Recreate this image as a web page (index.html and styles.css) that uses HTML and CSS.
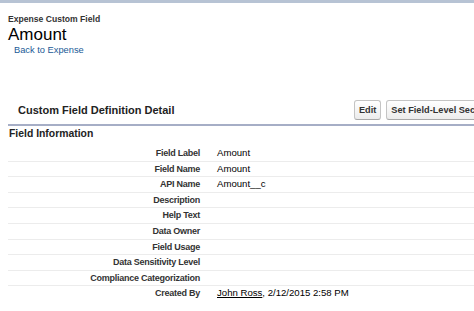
FILE: index.html
```html
<html>
 <head>
	<meta charset="UTF-8">
	<title>Amount</title>
	<link rel="stylesheet" href="styles.css">
 </head>
 <body>
 <div class="topbar"></div>
 <div class="page">
	<div class="crumb">Expense Custom Field</div>
	<h1 class="title">Amount</h1>
	<a class="back" href="#">Back to Expense</a>

	<div class="detail_head">
		<h2>Custom Field Definition Detail</h2>
		<div class="btns">
			<button class="btn">Edit</button>
			<button class="btn">Set Field-Level Security</button>
		</div>
	</div>

	<h3 class="section">Field Information</h3>
	<table class="fields">
		<tr><th>Field Label</th><td>Amount</td></tr>
		<tr><th>Field Name</th><td>Amount</td></tr>
		<tr><th>API Name</th><td>Amount__c</td></tr>
		<tr><th>Description</th><td></td></tr>
		<tr><th>Help Text</th><td></td></tr>
		<tr><th>Data Owner</th><td></td></tr>
		<tr><th>Field Usage</th><td></td></tr>
		<tr><th>Data Sensitivity Level</th><td></td></tr>
		<tr><th>Compliance Categorization</th><td></td></tr>
		<tr class="last"><th>Created By</th><td><a href="#">John Ross</a>, 2/12/2015 2:58 PM</td></tr>
	</table>
 </div>
 </body>
</html>
```

FILE: styles.css
```css
*{margin:0;padding:0;}
body{
	font-family: "Liberation Sans", Arial, sans-serif;
	color: #000;
	background: #fff;
	overflow: hidden;
}

.topbar{
	height: 3px;
	background: #b7c3d4;
}

.page{
	padding: 10px 0 0 8px;
}

.crumb{
	font-size: 8.6px;
	font-weight: bold;
	color: #333;
	line-height: 12px;
}
.title{
	font-size: 17px;
	font-weight: normal;
	line-height: 20px;
}
.back{
	display: block;
	margin: -1px 0 0 6px;
	font-size: 9.3px;
	line-height: 12px;
	color: #1a5a96;
	text-decoration: none;
}

.detail_head{
	display: flex;
	align-items: center;
	justify-content: space-between;
	margin-top: 44px;
	padding: 0 0 4px 10px;
	border-bottom: 2px solid #a6aec6;
	white-space: nowrap;
}
.detail_head h2{
	font-size: 11px;
	font-weight: bold;
	color: #222;
}
.btns{
	display: flex;
	gap: 5px;
	margin-right: -26px;
}
.btn{
	font-family: "Liberation Sans", Arial, sans-serif;
	font-size: 9.2px;
	font-weight: bold;
	color: #333;
	height: 20px;
	padding: 0 4px;
	background: linear-gradient(#fff, #ececec);
	border: 1px solid #c4c4c4;
	border-bottom-color: #a8a8a8;
	border-radius: 3px;
}

.section{
	font-size: 10.4px;
	font-weight: bold;
	color: #222;
	padding: 1px 0 0 1px;
	line-height: 14px;
}

.fields{
	width: 100%;
	border-collapse: collapse;
	margin-top: 5px;
}
.fields th, .fields td{
	line-height: 14.6px;
	padding: 0;
	border-bottom: 1px solid #ececec;
	vertical-align: middle;
	white-space: nowrap;
}
.fields th{
	width: 192px;
	text-align: right;
	font-size: 9px;
	letter-spacing: -0.25px;
	font-weight: bold;
	color: #333;
}
.fields td{
	padding-left: 17px;
	font-size: 9.6px;
	color: #000;
}
.fields tr.last th, .fields tr.last td{
	border-bottom: none;
}
.fields a{
	color: #000;
}
```
